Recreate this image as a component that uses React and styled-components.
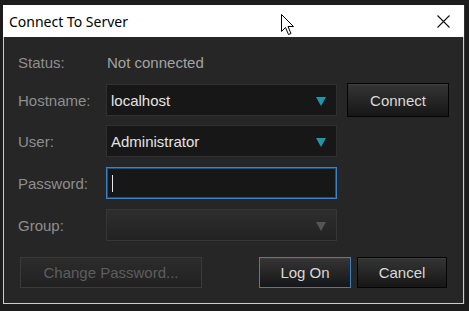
import styled, { createGlobalStyle } from "styled-components";

const GlobalStyle = createGlobalStyle`
  html, body {
    margin: 0;
    padding: 0;
    background: #1c1c1c;
    width: 469px;
    height: 311px;
    overflow: hidden;
  }
`;

const App = () => {
  return (
    <>
      <GlobalStyle />
      <StyledWindow>
        <StyledTitleBar>
          <span>Connect To Server</span>
          <StyledClose>
            <svg width="13" height="13" viewBox="0 0 13 13">
              <path d="M0.5 0.5 L12.5 12.5 M12.5 0.5 L0.5 12.5" stroke="#111" strokeWidth="1.1" />
            </svg>
          </StyledClose>
        </StyledTitleBar>
        <StyledContent>
          <StyledStatusRow>
            <StyledLabel>Status:</StyledLabel>
            <StyledValue>Not connected</StyledValue>
          </StyledStatusRow>
          <StyledRow>
            <StyledLabel>Hostname:</StyledLabel>
            <StyledField>
              localhost
              <StyledArrow />
            </StyledField>
            <StyledButton>Connect</StyledButton>
          </StyledRow>
          <StyledRow>
            <StyledLabel>User:</StyledLabel>
            <StyledField>
              Administrator
              <StyledArrow />
            </StyledField>
          </StyledRow>
          <StyledRow>
            <StyledLabel>Password:</StyledLabel>
            <StyledField $focused>
              <StyledCaret />
            </StyledField>
          </StyledRow>
          <StyledRow>
            <StyledLabel>Group:</StyledLabel>
            <StyledField $disabled>
              <StyledArrow $disabled />
            </StyledField>
          </StyledRow>
          <StyledActions>
            <StyledButton $disabled $width="182px">
              Change Password...
            </StyledButton>
            <StyledSpacer />
            <StyledButton $focused $width="92px">
              Log On
            </StyledButton>
            <StyledButton $width="90px">Cancel</StyledButton>
          </StyledActions>
        </StyledContent>
        <StyledCursor width="14" height="23" viewBox="0 0 14 23">
          <path
            d="M0.5 0.5 L0.5 17.5 L4.5 13.5 L7.5 20.5 L10 19.5 L7 12.5 L12.5 12.5 Z"
            fill="#fff"
            stroke="#000"
            strokeWidth="1"
            strokeLinejoin="miter"
          />
        </StyledCursor>
      </StyledWindow>
    </>
  );
};

const StyledWindow = styled.div`
  position: relative;
  margin: 5px 0 0 3px;
  width: 461px;
  height: 299px;
  display: flex;
  flex-direction: column;
  box-shadow: 1px 0 0 #333;
`;

const StyledTitleBar = styled.div`
  height: 32px;
  flex: none;
  background: #ffffff;
  display: flex;
  align-items: center;
  justify-content: space-between;
  padding: 0 14px 0 6px;
  font-family: "Segoe UI", "Noto Sans", sans-serif;
  font-size: 14px;
  color: #000;
`;

const StyledClose = styled.div`
  display: flex;
  align-items: center;
  padding-top: 1px;
`;

const StyledContent = styled.div`
  flex: 1;
  background: #262626;
  border: 1px solid #cdcdcd;
  border-top: none;
  padding: 15px 0 0 14px;
  display: flex;
  flex-direction: column;
  font-family: "Liberation Sans", Arial, sans-serif;
  font-size: 15px;
`;

const StyledStatusRow = styled.div`
  display: grid;
  grid-template-columns: 88px 1fr;
  align-items: center;
  height: 20px;
  margin-bottom: 11px;
`;

const StyledRow = styled.div`
  display: grid;
  grid-template-columns: 78px 231px 102px;
  column-gap: 10px;
  align-items: center;
  height: 32px;
  margin-bottom: 10px;
`;

const StyledLabel = styled.span`
  color: #8e8e8e;
`;

const StyledValue = styled.span`
  color: #a3a3a3;
  padding-left: 1px;
`;

const StyledField = styled.div`
  position: relative;
  box-sizing: border-box;
  height: 32px;
  display: flex;
  align-items: center;
  padding-left: 4px;
  color: #e4e4e4;
  background: ${(p) =>
    p.$disabled ? "linear-gradient(#2e2e2e, #222222)" : "#171717"};
  border: 1px solid ${(p) => (p.$focused ? "#3c82c6" : p.$disabled ? "#363636" : "#303030")};
  box-shadow: ${(p) => (p.$focused ? "inset 0 0 0 1px #1d4d7a" : "none")};
`;

const StyledArrow = styled.span`
  position: absolute;
  right: 10px;
  top: 12px;
  width: 0;
  height: 0;
  border-left: 5px solid transparent;
  border-right: 5px solid transparent;
  border-top: 9px solid ${(p) => (p.$disabled ? "#555555" : "#1f97ab")};
`;

const StyledCaret = styled.span`
  width: 1px;
  height: 17px;
  margin-left: 1px;
  background: #e8e8e8;
`;

const StyledButton = styled.div`
  box-sizing: border-box;
  width: ${(p) => p.$width || "102px"};
  height: ${(p) => (p.$width ? "31px" : "34px")};
  display: flex;
  align-items: center;
  justify-content: center;
  color: ${(p) => (p.$disabled ? "#5e5e5e" : "#d9d9d9")};
  background: ${(p) =>
    p.$disabled
      ? "linear-gradient(#2c2c2c, #212121)"
      : "linear-gradient(#353535, #161616)"};
  border: 1px solid ${(p) => (p.$focused ? "#3a7fc4" : p.$disabled ? "#3a3a3a" : "#050505")};
  box-shadow: ${(p) => (p.$disabled ? "none" : "inset 0 1px 0 #3e3e3e")};
`;

const StyledActions = styled.div`
  display: flex;
  align-items: center;
  gap: 6px;
  margin-top: 6px;
  padding: 0 16px 0 2px;
`;

const StyledSpacer = styled.div`
  flex: 1;
`;

const StyledCursor = styled.svg`
  position: absolute;
  left: 278px;
  top: 9px;
`;

export default App;
